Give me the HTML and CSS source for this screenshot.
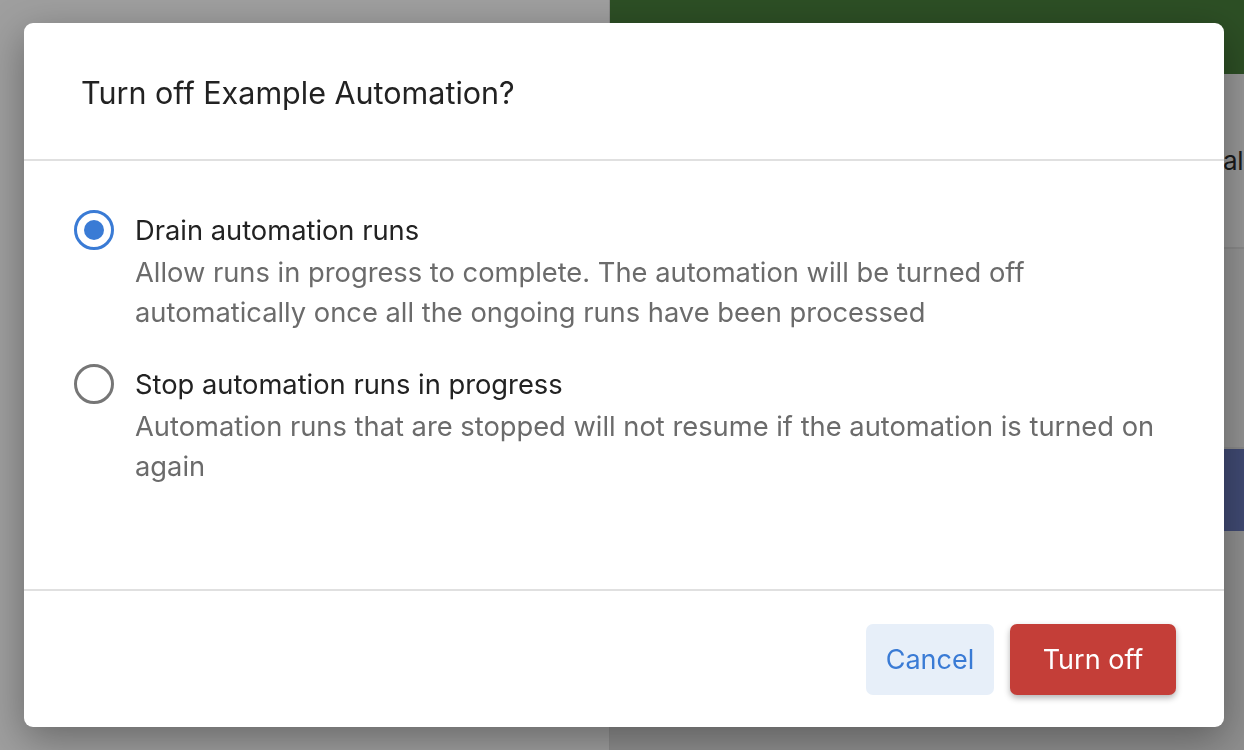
FILE: index.html
```html
<!DOCTYPE html>
<html>
<head>
<meta charset="utf-8">
<link rel="stylesheet" href="styles.css">
</head>
<body>
<div class="page">
  <div class="left-pane"></div>
  <div class="right-pane">
    <div class="green-bar"></div>
    <div class="row row-label"><span class="label-text">al</span></div>
    <div class="row row-mid"></div>
    <div class="blue-bar"></div>
    <div class="row-rest"></div>
  </div>
</div>
<div class="overlay">
  <div class="modal">
    <div class="modal-header">
      <h2 class="modal-title">Turn off Example Automation?</h2>
    </div>
    <div class="modal-body">
      <label class="option">
        <span class="radio radio-checked"><span class="radio-dot"></span></span>
        <span class="option-text">
          <span class="option-title">Drain automation runs</span>
          <span class="option-desc">Allow runs in progress to complete. The automation will be turned off automatically once all the ongoing runs have been processed</span>
        </span>
      </label>
      <label class="option">
        <span class="radio"></span>
        <span class="option-text">
          <span class="option-title">Stop automation runs in progress</span>
          <span class="option-desc">Automation runs that are stopped will not resume if the automation is turned on again</span>
        </span>
      </label>
    </div>
    <div class="modal-footer">
      <button class="btn btn-cancel">Cancel</button>
      <button class="btn btn-danger">Turn off</button>
    </div>
  </div>
</div>
</body>
</html>
```
FILE: styles.css
```css
* { box-sizing: border-box; }
html, body { margin: 0; padding: 0; }
body {
  width: 1244px;
  height: 750px;
  overflow: hidden;
  font-family: Inter, "Liberation Sans", Arial, sans-serif;
  background: #9e9e9e;
}
.page {
  display: flex;
  width: 1244px;
  height: 750px;
}
.left-pane {
  width: 610px;
  background: #9f9f9f;
  border-right: 1px solid #8c8c8c;
}
.right-pane {
  flex: 1;
  display: flex;
  flex-direction: column;
  background: #979797;
}
.green-bar {
  height: 74px;
  background: #2d4f25;
}
.row-label {
  height: 175px;
  display: flex;
  align-items: center;
  justify-content: flex-end;
  padding-right: 1px;
  border-bottom: 2px solid #8a8a8a;
}
.label-text {
  font-size: 26px;
  color: #1a1a1a;
  letter-spacing: -0.5px;
}
.row-mid {
  height: 200px;
  background: #939393;
  border-bottom: 2px solid #8a8a8a;
}
.blue-bar {
  height: 82px;
  background: #404a73;
}
.row-rest {
  flex: 1;
  background: #8f8f8f;
}
.overlay {
  position: fixed;
  inset: 0;
  padding: 23px 20px 23px 24px;
}
.modal {
  width: 1200px;
  height: 704px;
  background: #fff;
  border-radius: 9px;
  box-shadow: 0 12px 40px rgba(0,0,0,0.35);
  display: flex;
  flex-direction: column;
}
.modal-header {
  height: 138px;
  display: flex;
  align-items: center;
  padding: 2px 57px 0;
  border-bottom: 2px solid #e0e0e0;
}
.modal-title {
  margin: 0;
  font-size: 30.5px;
  font-weight: 400;
  color: #222;
}
.modal-body {
  flex: 1;
  padding: 49px 48px 0 50px;
  border-bottom: 2px solid #e0e0e0;
  display: flex;
  flex-direction: column;
  gap: 31px;
}
.option {
  display: flex;
  gap: 21px;
}
.radio {
  width: 40px;
  height: 40px;
  flex: none;
  border: 3px solid #767676;
  border-radius: 50%;
  display: flex;
  align-items: center;
  justify-content: center;
}
.radio-checked {
  border-color: #3a7bd5;
}
.radio-dot {
  width: 20px;
  height: 20px;
  border-radius: 50%;
  background: #3a7bd5;
}
.option-text {
  display: flex;
  flex-direction: column;
}
.option-title {
  font-size: 27.3px;
  line-height: 42px;
  color: #222;
}
.option-desc {
  font-size: 27.3px;
  line-height: 40px;
  color: #6b6b6b;
  margin-top: 1px;
}
.modal-footer {
  height: 136px;
  display: flex;
  justify-content: flex-end;
  align-items: center;
  gap: 16px;
  padding: 0 48px;
}
.btn {
  height: 71px;
  border: none;
  border-radius: 7px;
  font-family: Inter, "Liberation Sans", Arial, sans-serif;
  font-size: 27px;
  padding: 0;
}
.btn-cancel {
  width: 128px;
  background: #e7eff9;
  color: #3a7bd5;
}
.btn-danger {
  width: 166px;
  background: #c43e38;
  color: #fff;
  box-shadow: 0 3px 6px rgba(0,0,0,0.3);
}
```
